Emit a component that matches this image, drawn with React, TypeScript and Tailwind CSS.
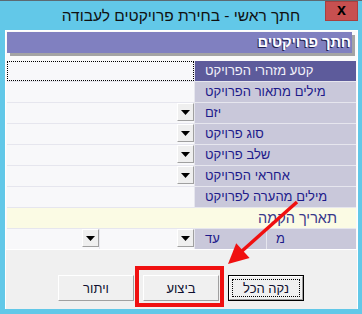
import React from "react";

const F = { fontFamily: '"Liberation Sans", Arial, "DejaVu Sans", sans-serif' };

function Drop() {
  return (
    <div className="w-[17px] h-[18px] bg-[#efefef] border-t border-l border-t-white border-l-white border-r border-b border-r-[#a0a0a0] border-b-[#a0a0a0] flex items-center justify-center">
      <svg width="9" height="5" viewBox="0 0 9 5">
        <polygon points="0,0 9,0 4.5,5" fill="#000" />
      </svg>
    </div>
  );
}

function Row({ label, drop, active }: { label: string; drop?: boolean; active?: boolean }) {
  return (
    <div className="flex h-[20px] gap-[1px]">
      <div
        className={
          "w-[187px] h-[20px] bg-[#f8f8fa] flex justify-end items-start " +
          (active ? "border border-dotted border-black" : "")
        }
      >
        {drop ? <Drop /> : null}
      </div>
      <div
        className={
          "w-[161px] h-[20px] pl-[10px] text-[13px] leading-[20px] whitespace-nowrap " +
          (active ? "bg-[#5d5b9b] text-[#f2f2fa]" : "bg-[#c9c8da] text-[#1d1a8a]")
        }
      >
        <span dir="rtl">{label}</span>
      </div>
    </div>
  );
}

function Btn({ children, focus }: { children: React.ReactNode; focus?: boolean }) {
  return (
    <div className={"w-[76px] h-[26px] " + (focus ? "border border-black" : "")}>
      <div className="w-full h-full bg-[#f0f0f0] border-t border-l border-t-white border-l-white border-r border-b border-r-[#a0a0a0] border-b-[#a0a0a0] flex items-center justify-center p-[2px]">
        <div
          className={
            "w-full h-full flex items-center justify-center text-[13px] leading-none text-[#101030] whitespace-nowrap " +
            (focus ? "border border-dotted border-black" : "")
          }
          dir="rtl"
        >
          {children}
        </div>
      </div>
    </div>
  );
}

export default function App() {
  return (
    <div className="relative w-[362px] h-[314px] bg-[#62c8e8] overflow-hidden" style={F}>
      <div className="h-[1px] bg-[#5c6a72]" />
      {/* title bar */}
      <div className="h-[29px] flex items-start">
        <div className="w-[37px]" />
        <div className="flex-1 text-center text-[15.5px] leading-[29px] text-[#101010] whitespace-nowrap" dir="rtl">
          חתך ראשי - בחירת פרויקטים לעבודה
        </div>
        <div className="w-[33px] h-[20px] bg-[#c75050] border border-[#a84040] flex items-center justify-center text-[16px] font-bold text-black leading-none pb-[2px]">
          x
        </div>
        <div className="w-[4px]" />
      </div>
      {/* client */}
      <div className="ml-[5px] w-[353px] h-[279px] border-t border-l border-r border-white flex flex-col">
        <div className="bg-[#fafafa] pl-[1px] pr-[1px] pt-[1px]">
          <div className="w-[345px] h-[21px] bg-[#8080c0] shadow-[3px_3px_0_#a4a4a4] flex justify-end items-center pr-[1px]">
            <span
              dir="rtl"
              className="text-[14.5px] font-bold text-white whitespace-nowrap [text-shadow:-1px_1px_0_#202050]"
            >
              חתך פרויקטים
            </span>
          </div>
          <div className="mt-[8px] flex flex-col gap-[1px] bg-[#e6e6ee]">
            <Row label="קטע מזהרי הפרויקט" active />
            <Row label="מילים מתאור הפרויקט" />
            <Row label="יזם" drop />
            <Row label="סוג פרויקט" drop />
            <Row label="שלב פרויקט" drop />
            <Row label="אחראי הפרויקט" drop />
            <Row label="מילים מהערה לפרויקט" />
            <div className="h-[20px] bg-[#fbfbe4] flex justify-end pr-[19px]">
              <span dir="rtl" className="text-[14.5px] leading-[20px] text-[#38388a] whitespace-nowrap">
                תאריך הקמה
              </span>
            </div>
            <div className="flex h-[20px] gap-[1px]">
              <div className="w-[92px] bg-[#f8f8fa] flex justify-end items-start">
                <Drop />
              </div>
              <div className="w-[94px] bg-[#f8f8fa] flex justify-end items-start">
                <Drop />
              </div>
              <div className="w-[71px] bg-[#c9c8da] pl-[10px] text-[13px] leading-[20px] text-[#1d1a8a]">
                <span dir="rtl">עד</span>
              </div>
              <div className="w-[89px] bg-[#c9c8da] pl-[9px] text-[13px] leading-[20px] text-[#1d1a8a]">
                <span dir="rtl">מ</span>
              </div>
            </div>
          </div>
        </div>
        <div className="relative flex-1 bg-[#f0f0f0] border-t border-white pt-[25px] pl-[52px] flex items-start">
          <Btn>ויתור</Btn>
          <div className="ml-[9px]">
            <Btn>ביצוע</Btn>
          </div>
          <div className="ml-[9px]">
            <Btn focus>נקה הכל</Btn>
          </div>
          <div className="absolute left-[129px] top-[16px] w-[89px] h-[41px] border-[4px] border-[#f01010]" />
        </div>
      </div>
      {/* arrow annotation */}
      <svg className="absolute left-0 top-0 pointer-events-none" width="362" height="314" viewBox="0 0 362 314">
        <line x1="297" y1="202" x2="242" y2="251" stroke="#f01010" strokeWidth="3.5" />
        <polygon points="228,264 249.6,258 236.2,243.2" fill="#f01010" />
      </svg>
    </div>
  );
}
